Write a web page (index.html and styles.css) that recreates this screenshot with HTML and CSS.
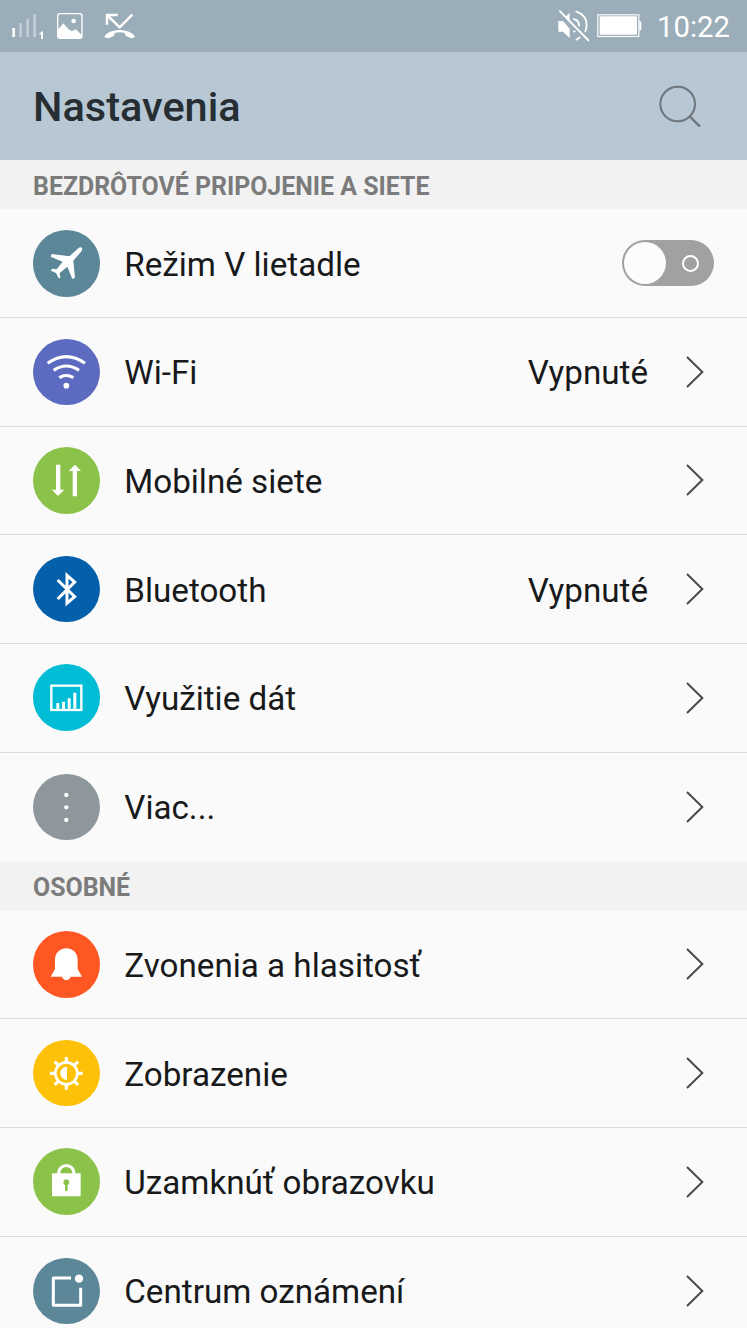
FILE: index.html
```html
<!DOCTYPE html>
<html lang="sk">
<head>
    <meta charset="utf-8">
    <meta name="viewport" content="width=device-width, initial-scale=1">
    <title>Nastavenia</title>
    <link rel="stylesheet" href="styles.css">
</head>

<body>
    <div class="statusbar">
        <svg class="status-left" viewBox="0 0 450 156">
            <g fill="#fff">
                <rect x="37" y="84" width="8" height="27"/>
                <g opacity="0.4">
                    <rect x="58" y="69" width="8" height="42"/>
                    <rect x="79" y="56" width="8" height="55"/>
                    <rect x="100" y="42" width="8" height="69"/>
                </g>
                <path d="M118 101L126 94H129V117H123V102L118 104Z"/>
                <path fill-rule="evenodd" d="M180 39H239Q248 39 248 48V108Q248 117 239 117H180Q171 117 171 108V48Q171 39 180 39ZM175 88L190 70L204 86L215 94L228 88L244 104V49Q244 43 238 43H181Q175 43 175 49Z"/>
                <circle cx="221" cy="63" r="7"/>
                <path d="M313 109C332 84 386 84 405 109C402 116 394 117 385 111Q376 109 374 99Q359 94 344 99Q343 109 334 111C325 117 316 116 313 109Z"/>
            </g>
            <path d="M321 74V45H353M323 47L359 82L397 44" fill="none" stroke="#fff" stroke-width="7.5"/>
        </svg>
        <div class="status-right">
            <svg class="status-icons" viewBox="170 0 260 156">
                <path d="M177 63H191L211 86V114L191 95H177ZM198 50L211 39V63Z" fill="#fff"/>
                <g fill="none" stroke="#fff" stroke-width="5.500">
                    <path d="M180 32L269 123"/>
                    <path d="M229 34Q262 44 262 75Q262 88 257 96"/>
                    <path d="M222 57Q240 60 239 79"/>
                    <path d="M243 111L230 120M222 96L228 93"/>
                </g>
                <rect x="295.500" y="44.500" width="123" height="65" fill="none" stroke="#fff" stroke-width="3.500"/>
                <rect x="301" y="49" width="112" height="55" rx="3" fill="#fff"/>
                <path d="M420 62H423V65H426V90H423V93H420Z" fill="#fff"/>
            </svg>
            <span class="clock">10:22</span>
        </div>
    </div>

    <div class="header">
        <h1>Nastavenia</h1>
        <svg class="search" viewBox="0 0 126 126">
            <circle cx="56" cy="57" r="52" fill="none" stroke="#6c757b" stroke-width="6"/>
            <path d="M92 94L123 125" fill="none" stroke="#6c757b" stroke-width="7"/>
        </svg>
    </div>

    <h2>BEZDRÔTOVÉ PRIPOJENIE A SIETE</h2>
    <div class="list">
        <div class="row">
            <svg class="icon slate" viewBox="-100 -100 200 200">
                <path fill="#fff" d="M44 -48Q50 -45 46 -37L21 -8L26 43L18 47L3 10L-20 29L-18 43L-23 45L-31 29L-46 22L-43 16L-29 18L-11 -5L-47 -20L-44 -28L9 -21L36 -45Q40 -49 44 -48Z"/>
            </svg>
            <span class="label">Režim V lietadle</span>
            <span class="toggle"><i class="knob"></i><i class="ring"></i></span>
        </div>
        <div class="row">
            <svg class="icon indigo" viewBox="-100 -100 200 200">
                <g fill="none" stroke="#fff" stroke-width="9.500">
                    <path d="M-56 -27Q0 -67 56 -27"/>
                    <path d="M-38 -6Q0 -32 38 -6"/>
                    <path d="M-21 16Q0 3 21 16"/>
                </g>
                <circle cx="0" cy="40" r="8.500" fill="#fff"/>
            </svg>
            <span class="label">Wi-Fi</span>
            <span class="value">Vypnuté</span>
            <svg class="arrow" viewBox="0 0 54 96"><path d="M3 3L49 48L3 93"/></svg>
        </div>
        <div class="row">
            <svg class="icon green" viewBox="-100 -100 200 200">
                <path fill="#fff" d="M-31 -47H-18V28H-6L-25 47L-43 28H-31ZM19 48V-28H7L26 -47L44 -28H32V48Z"/>
            </svg>
            <span class="label">Mobilné siete</span>
            <svg class="arrow" viewBox="0 0 54 96"><path d="M3 3L49 48L3 93"/></svg>
        </div>
        <div class="row">
            <svg class="icon blue" viewBox="-100 -100 200 200">
                <path fill="none" stroke="#fff" stroke-width="9" d="M-26 -28L25 22L2 42V-42L25 -22L-26 29"/>
            </svg>
            <span class="label">Bluetooth</span>
            <span class="value">Vypnuté</span>
            <svg class="arrow" viewBox="0 0 54 96"><path d="M3 3L49 48L3 93"/></svg>
        </div>
        <div class="row">
            <svg class="icon cyan" viewBox="-100 -100 200 200">
                <rect x="-45" y="-35" width="90" height="73" fill="none" stroke="#fff" stroke-width="7"/>
                <path fill="#fff" d="M-30 17H-21V34H-30ZM-13 13H-4V34H-13ZM4 3H13V34H4ZM21 -14H30V34H21Z"/>
            </svg>
            <span class="label">Využitie dát</span>
            <svg class="arrow" viewBox="0 0 54 96"><path d="M3 3L49 48L3 93"/></svg>
        </div>
        <div class="row">
            <svg class="icon gray" viewBox="-100 -100 200 200">
                <g fill="#fff">
                    <circle cx="0" cy="-37" r="6.500"/>
                    <circle cx="0" cy="0" r="6.500"/>
                    <circle cx="0" cy="38" r="6.500"/>
                </g>
            </svg>
            <span class="label">Viac...</span>
            <svg class="arrow" viewBox="0 0 54 96"><path d="M3 3L49 48L3 93"/></svg>
        </div>
    </div>

    <h2>OSOBNÉ</h2>
    <div class="list">
        <div class="row">
            <svg class="icon orange" viewBox="-100 -100 200 200">
                <path fill="#fff" d="M-47 37L-34 14V-13C-34 -60 34 -60 34 -13V14L47 37H13Q9 47 0 47Q-9 47 -13 37Z"/>
            </svg>
            <span class="label">Zvonenia a hlasitosť</span>
            <svg class="arrow" viewBox="0 0 54 96"><path d="M3 3L49 48L3 93"/></svg>
        </div>
        <div class="row">
            <svg class="icon yellow" viewBox="-100 -100 200 200">
                <g fill="none" stroke="#fff">
                    <circle cx="0" cy="0" r="33" stroke-width="8"/>
                    <path stroke-width="9.500" d="M0 -49V-34M0 49V34M-49 0H-34M49 0H34M-35 -35L-25 -25M35 -35L25 -25M-35 35L-25 25M35 35L25 25"/>
                </g>
                <path fill="#fff" d="M2 -20V20A20 20 0 0 1 2 -20Z"/>
            </svg>
            <span class="label">Zobrazenie</span>
            <svg class="arrow" viewBox="0 0 54 96"><path d="M3 3L49 48L3 93"/></svg>
        </div>
        <div class="row">
            <svg class="icon green" viewBox="-100 -100 200 200">
                <path fill="none" stroke="#fff" stroke-width="9" d="M-23 -22C-23 -56 23 -56 23 -22"/>
                <path fill="#fff" fill-rule="evenodd" d="M-43 -24H43V45H-43ZM-4 11V27Q0 33 4 27V11A9 9 0 1 0 -4 11Z"/>
            </svg>
            <span class="label">Uzamknúť obrazovku</span>
            <svg class="arrow" viewBox="0 0 54 96"><path d="M3 3L49 48L3 93"/></svg>
        </div>
        <div class="row">
            <svg class="icon slate" viewBox="-100 -100 200 200">
                <path fill="none" stroke="#fff" stroke-width="9" stroke-linejoin="round" d="M14 -40H-39V42H43V-11"/>
                <circle cx="38" cy="-38" r="12.500" fill="#fff"/>
            </svg>
            <span class="label">Centrum oznámení</span>
            <svg class="arrow" viewBox="0 0 54 96"><path d="M3 3L49 48L3 93"/></svg>
        </div>
    </div>
</body>
</html>
```
FILE: styles.css
```css
* {
    box-sizing: border-box;
}

html, body {
    margin: 0;
    height: 1328px;
    overflow: hidden;
    background-color: #fafafa;
    font-family: Roboto, "Liberation Sans", sans-serif;
    color: #18191a;
}

.statusbar {
    display: flex;
    justify-content: space-between;
    height: 52px;
    background-color: #9badb8;
}

.status-left {
    width: 150px;
    height: 52px;
}

.status-right {
    display: flex;
    padding-right: 17px;
}

.status-icons {
    width: 86.67px;
    height: 52px;
}

.clock {
    margin-left: 14px;
    color: #fff;
    font-size: 29.3px;
    line-height: 54px;
}

.header {
    display: flex;
    align-items: center;
    justify-content: space-between;
    height: 108px;
    padding: 0 46px 0 33px;
    background-color: #b7c7d4;
}

h1 {
    margin: 0;
    font-size: 41.5px;
    font-weight: 500;
    line-height: 108px;
    padding-top: 2px;
    color: #262e33;
}

.search {
    width: 42px;
    height: 42px;
}

h2 {
    margin: 0;
    height: 49.4px;
    padding-left: 33px;
    background-color: #f2f2f2;
    color: #7b7b7b;
    font-size: 24.9px;
    font-weight: 700;
    line-height: 53px;
}

.row {
    display: flex;
    align-items: center;
    height: 108.65px;
    padding: 0 43px 0 33px;
    border-bottom: 1px solid #dcdcdc;
}

.row:last-child {
    border-bottom: none;
}

.icon {
    flex: none;
    width: 66.67px;
    height: 66.67px;
    margin-right: 24.6px;
    border-radius: 50%;
}

.slate { background-color: #5c8799; }
.indigo { background-color: #5c6bc0; }
.green { background-color: #8bc34a; }
.blue { background-color: #0560ab; }
.cyan { background-color: #00bcd4; }
.gray { background-color: #8d979c; }
.orange { background-color: #ff5722; }
.yellow { background-color: #fdc108; }

.label {
    flex: 1;
    font-size: 33.2px;
    padding-top: 2px;
}

.value {
    font-size: 33.2px;
    padding-top: 2px;
    margin-right: 38px;
}

.arrow {
    width: 18px;
    height: 32px;
    fill: none;
    stroke: #4a4a4a;
    stroke-width: 6;
}

.toggle {
    display: flex;
    align-items: center;
    justify-content: space-between;
    width: 92px;
    height: 46px;
    margin-right: -10px;
    padding: 0 15px 0 2px;
    border-radius: 23px;
    background-color: #a1a1a1;
}

.knob {
    width: 42px;
    height: 42px;
    border-radius: 50%;
    background-color: #fcfcfc;
}

.ring {
    width: 17px;
    height: 17px;
    border: 2px solid #fff;
    border-radius: 50%;
}
```
